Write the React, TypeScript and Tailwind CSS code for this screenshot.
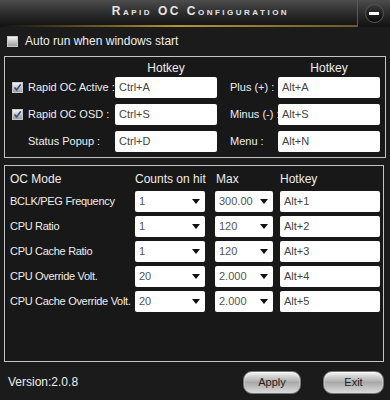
import React from "react";

type HotkeyRow = {
  check?: boolean;
  label: string;
  value: string;
  rightLabel: string;
  rightValue: string;
};

const hotkeyRows: HotkeyRow[] = [
  { check: true, label: "Rapid OC Active :", value: "Ctrl+A", rightLabel: "Plus (+) :", rightValue: "Alt+A" },
  { check: true, label: "Rapid OC OSD :", value: "Ctrl+S", rightLabel: "Minus (-) :", rightValue: "Alt+S" },
  { label: "Status Popup :", value: "Ctrl+D", rightLabel: "Menu :", rightValue: "Alt+N" },
];

const ocRows = [
  { label: "BCLK/PEG Frequency", count: "1", max: "300.00", key: "Alt+1" },
  { label: "CPU Ratio", count: "1", max: "120", key: "Alt+2" },
  { label: "CPU Cache Ratio", count: "1", max: "120", key: "Alt+3" },
  { label: "CPU Override Volt.", count: "20", max: "2.000", key: "Alt+4" },
  { label: "CPU Cache Override Volt.", count: "20", max: "2.000", key: "Alt+5" },
];

const CheckBox = ({ checked }: { checked?: boolean }) => (
  <div className="w-[11px] h-[11px] shrink-0 border border-[#c8c8c8] bg-gradient-to-b from-[#f4f4f4] to-[#9c9c9c] flex items-center justify-center">
    {checked && (
      <svg width="9" height="9" viewBox="0 0 9 9">
        <path d="M1.5 4.5 L3.6 7 L7.8 1.2" fill="none" stroke="#3a4a8a" strokeWidth="1.6" />
      </svg>
    )}
  </div>
);

const TextBox = ({ value, width }: { value: string; width: string }) => (
  <div className={`${width} h-[21px] shrink-0 bg-white rounded-[2px] flex items-center pl-[4px] text-[#444] text-[11px]`}>
    {value}
  </div>
);

const Select = ({ value, width }: { value: string; width: string }) => (
  <div className={`${width} h-[21px] shrink-0 bg-white rounded-[2px] flex items-center justify-between pl-[4px] pr-[5px] text-[#555] text-[11px]`}>
    <span>{value}</span>
    <svg width="8" height="5" viewBox="0 0 8 5">
      <path d="M0 0 H8 L4 5 Z" fill="#111" />
    </svg>
  </div>
);

const GlossButton = ({ label, width }: { label: string; width: string }) => (
  <div className={`${width} h-[23px] rounded-[9px] border border-[#777] bg-gradient-to-b from-[#f2f2f2] via-[#a9a9a9] to-[#dcdcdc] shadow-[inset_0_1px_2px_rgba(255,255,255,0.9)] flex items-center justify-center text-[11px] text-[#222]`}>
    {label}
  </div>
);

export default function App() {
  return (
    <div
      className="relative w-[390px] h-[400px] bg-[#1b1b1b] text-[#eeeeee] flex flex-col overflow-hidden"
      style={{ fontFamily: '"Liberation Sans", Arial, sans-serif' }}
    >
      {/* title bar */}
      <div className="h-[27px] flex bg-gradient-to-b from-[#4d4d4d] via-[#2c2c2c] to-[#111]">
        <div className="flex-1 flex flex-col">
          <div className="flex-1 flex items-center justify-center pl-[44px] pb-[3px] text-[12px] font-bold tracking-[2.5px] text-[#e4e4e4] [font-variant:small-caps]">
            Rapid OC Configuration
          </div>
          <div className="h-[2px] bg-gradient-to-r from-transparent via-[#b8942e] to-[#6b5a2a]" />
        </div>
        <div className="w-px bg-[#5a5a5a]" />
        <div className="w-[32px] flex items-center justify-center">
          <div className="w-[19px] h-[19px] rounded-full bg-gradient-to-b from-[#3a3a3a] to-[#0a0a0a] border border-[#555] flex items-center justify-center">
            <div className="w-[10px] h-[3px] bg-white" />
          </div>
        </div>
      </div>

      {/* auto run */}
      <div className="h-[28px] flex items-center gap-[7px] pl-[7px] text-[12px]">
        <CheckBox />
        <span>Auto run when windows start</span>
      </div>

      {/* hotkey panel */}
      <div className="mx-[4px] mt-[1px] border border-[#c4c4c4] bg-[#181818] pb-[5px]">
        <div className="h-[20px] flex text-[12px]">
          <div className="w-[110px]" />
          <div className="w-[102px] text-center pt-[2px]">Hotkey</div>
          <div className="w-[61px]" />
          <div className="w-[102px] text-center pt-[2px]">Hotkey</div>
        </div>
        <div className="flex flex-col gap-[6px]">
          {hotkeyRows.map((r) => (
            <div key={r.label} className="h-[21px] flex items-center text-[11px]">
              <div className="w-[110px] flex items-center gap-[5px] pl-[7px]">
                {r.check ? <CheckBox checked /> : <div className="w-[11px]" />}
                <span className="whitespace-nowrap">{r.label}</span>
              </div>
              <TextBox value={r.value} width="w-[102px]" />
              <div className="w-[13px]" />
              <div className="w-[48px] whitespace-nowrap">{r.rightLabel}</div>
              <TextBox value={r.rightValue} width="w-[102px]" />
            </div>
          ))}
        </div>
      </div>

      {/* OC panel */}
      <div className="mx-[4px] mt-[7px] mr-[6px] h-[197px] border border-[#c4c4c4] bg-[#181818]">
        <div className="h-[25px] flex items-center text-[12px]">
          <div className="w-[130px] pl-[5px]">OC Mode</div>
          <div className="w-[80px]">Counts on hit</div>
          <div className="w-[65px] pl-[1px]">Max</div>
          <div>Hotkey</div>
        </div>
        <div className="flex flex-col gap-[4px]">
          {ocRows.map((r) => (
            <div key={r.label} className="h-[21px] flex items-center text-[11px]">
              <div className="w-[130px] pl-[5px] whitespace-nowrap tracking-[-0.3px]">{r.label}</div>
              <Select value={r.count} width="w-[70px]" />
              <div className="w-[10px]" />
              <Select value={r.max} width="w-[58px]" />
              <div className="w-[7px]" />
              <TextBox value={r.key} width="w-[100px]" />
            </div>
          ))}
        </div>
      </div>

      {/* footer */}
      <div className="flex-1 flex items-center pl-[8px] pr-[6px] pt-[2px]">
        <span className="text-[12px]">Version:2.0.8</span>
        <div className="flex-1" />
        <div className="flex gap-[22px]">
          <GlossButton label="Apply" width="w-[58px]" />
          <GlossButton label="Exit" width="w-[61px]" />
        </div>
      </div>
    </div>
  );
}
